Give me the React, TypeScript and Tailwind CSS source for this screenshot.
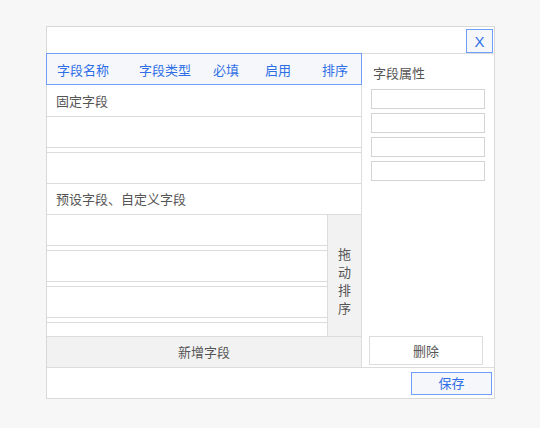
const columns = [
  { label: '字段名称', w: 'w-[82px]' },
  { label: '字段类型', w: 'w-[74px]' },
  { label: '必填', w: 'w-[52px]' },
  { label: '启用', w: 'w-[57px]' },
  { label: '排序', w: 'w-[30px]' },
]

function Spacer() {
  return <div className="h-[5px] shrink-0 border-b border-[#dcdcdc]" />
}

function Item() {
  return <div className="h-[31px] shrink-0 border-b border-[#dcdcdc]" />
}

export default function App() {
  return (
    <div className="h-[428px] w-[540px] bg-[#f7f7f7] pl-[46px] pt-[26px] font-['Noto_Sans_CJK_SC','Noto_Sans',sans-serif] text-[13px] text-[#555]">
      <div className="flex h-[373px] w-[449px] flex-col border border-[#d8d8d8] bg-white">
        {/* top bar */}
        <div className="flex h-[27px] shrink-0 justify-end border-b border-[#dcdcdc] pr-px pt-[2px]">
          <button className="flex h-[24px] w-[27px] items-center justify-center border border-[#6e9ef5] bg-[#f5f7fa] font-['Liberation_Sans',sans-serif] text-[15px] leading-none text-[#2f6fe6]">
            X
          </button>
        </div>

        <div className="flex min-h-0 flex-1">
          {/* left column */}
          <div className="flex w-[315px] shrink-0 flex-col border-r border-[#dcdcdc]">
            <div className="-ml-px -mt-px flex h-[32px] w-[316px] shrink-0 items-center border border-[#6e9ef5] bg-[#f5f7fa] pl-[10px] pt-[2px] text-[#2f6fe6]">
              {columns.map((c) => (
                <span key={c.label} className={`${c.w} shrink-0 whitespace-nowrap`}>
                  {c.label}
                </span>
              ))}
            </div>
            <div className="flex h-[32px] shrink-0 items-center border-b border-[#dcdcdc] pl-[9px]">固定字段</div>
            <Item />
            <Spacer />
            <Item />
            <div className="flex h-[31px] shrink-0 items-center border-b border-[#dcdcdc] pl-[9px]">预设字段、自定义字段</div>

            <div className="flex min-h-0 flex-1">
              <div className="flex min-w-0 flex-1 flex-col overflow-hidden">
                <Item />
                <Spacer />
                <Item />
                <Spacer />
                <Item />
                <Spacer />
                <Item />
              </div>
              <div className="flex w-[34px] shrink-0 items-center justify-center border-l border-[#dcdcdc] bg-[#f2f2f2] pt-[10px]">
                <span className="flex flex-col items-center leading-[18px]">
                  <span>拖</span>
                  <span>动</span>
                  <span>排</span>
                  <span>序</span>
                </span>
              </div>
            </div>

            <div className="flex h-[31px] shrink-0 items-center justify-center border-t border-[#dcdcdc] bg-[#f2f2f2]">
              新增字段
            </div>
          </div>

          {/* right panel */}
          <div className="flex flex-1 flex-col pl-[9px] pt-[9px]">
            <div className="h-[20px] pl-[2px] leading-[20px]">字段属性</div>
            <div className="mt-[6px] flex flex-col gap-[4px]">
              {[0, 1, 2, 3].map((i) => (
                <div key={i} className="h-[20px] w-[114px] border border-[#d4d4d4] bg-white" />
              ))}
            </div>
            <div className="flex-1" />
            <button className="-ml-[2px] mb-[2px] flex h-[29px] w-[114px] items-center justify-center border border-[#dcdcdc] bg-white text-[#555]">
              删除
            </button>
          </div>
        </div>

        {/* footer */}
        <div className="flex h-[31px] shrink-0 items-center justify-end border-t border-[#dcdcdc] pr-[2px]">
          <button className="flex h-[23px] w-[81px] items-center justify-center border border-[#6e9ef5] bg-[#f5f7fa] text-[#2f6fe6]">
            保存
          </button>
        </div>
      </div>
    </div>
  )
}
